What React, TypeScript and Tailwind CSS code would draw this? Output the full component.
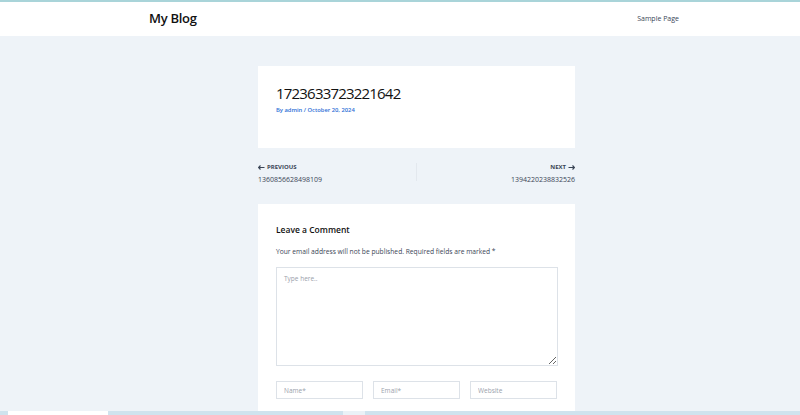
import React from "react";

function Arrow({ dir }: { dir: "left" | "right" }) {
  return (
    <svg width="7" height="5" viewBox="0 0 7 5" className="inline-block">
      {dir === "left" ? (
        <path d="M0.5 2.5 L6.5 2.5 M2.5 0.5 L0.5 2.5 L2.5 4.5" stroke="#3a4556" strokeWidth="1.2" fill="none" />
      ) : (
        <path d="M0.5 2.5 L6.5 2.5 M4.5 0.5 L6.5 2.5 L4.5 4.5" stroke="#3a4556" strokeWidth="1.2" fill="none" />
      )}
    </svg>
  );
}

export default function App() {
  const font = { fontFamily: '"Open Sans", "Noto Sans", Arial, sans-serif' };
  return (
    <div className="w-[800px] h-[415px] overflow-hidden bg-[#eef3f8] flex flex-col relative" style={font}>
      <div className="h-[2px] shrink-0 bg-[#a9d4d9]" />
      <header className="h-[34px] shrink-0 bg-white flex items-center justify-between pl-[149px] pr-[121px]">
        <div className="text-[13px] font-semibold tracking-[-0.3px] text-[#111] leading-none mb-[1px]">My Blog</div>
        <div className="text-[7px] text-[#3a4556] leading-none mb-[1px]">Sample Page</div>
      </header>
      <main className="flex flex-col items-start pl-[258px] pt-[30px]">
        <div className="w-[317px] h-[82px] shrink-0 bg-white pl-[18px] pt-[18px]">
          <h1 className="text-[15px] tracking-[-0.8px] text-[#111] leading-[18px]">1723633723221642</h1>
          <div className="mt-[6px] text-[5.8px] font-semibold text-[#2c6fd6] leading-none">By admin / October 20, 2024</div>
        </div>
        <div className="w-[317px] h-[56px] shrink-0 flex items-start pt-[15px]">
          <div className="flex-1 flex flex-col gap-[6px] pt-[1px]">
            <div className="flex items-center gap-[2px] text-[6px] font-bold text-[#3a4556] leading-none">
              <Arrow dir="left" />
              <span>PREVIOUS</span>
            </div>
            <div className="text-[7px] text-[#3a4556] leading-none">1360856628498109</div>
          </div>
          <div className="w-px h-[18px] bg-[#e3e8ee]" />
          <div className="flex-1 flex flex-col items-end gap-[6px] pt-[1px]">
            <div className="flex items-center gap-[2px] text-[6px] font-bold text-[#3a4556] leading-none">
              <span>NEXT</span>
              <Arrow dir="right" />
            </div>
            <div className="text-[7px] text-[#3a4556] leading-none">1394220238832526</div>
          </div>
        </div>
        <div className="w-[317px] h-[220px] shrink-0 bg-white px-[18px] pt-[22px]">
          <h2 className="text-[8.5px] font-semibold text-[#111] leading-none">Leave a Comment</h2>
          <p className="mt-[14px] text-[6.7px] text-[#3a4556] leading-none">
            Your email address will not be published. Required fields are marked *
          </p>
          <textarea
            className="mt-[12px] block w-[282px] h-[99px] border border-[#dde2e8] text-[6.5px] px-[7px] py-[6px] placeholder:text-[#9aa1ab] outline-none resize-y"
            placeholder="Type here.."
            style={font}
          />
          <div className="mt-[15px] flex gap-[10px]">
            {["Name*", "Email*", "Website"].map((p) => (
              <input
                key={p}
                placeholder={p}
                className="w-[87px] h-[18px] border border-[#dde2e8] px-[7px] text-[6.5px] placeholder:text-[#9aa1ab] outline-none"
                style={font}
              />
            ))}
          </div>
        </div>
      </main>
      <div className="absolute left-0 right-0 bottom-0 h-[4px] bg-[#cfe3ee] flex">
        <div className="ml-[8px] w-[100px] h-full bg-white" />
        <div className="ml-[235px] w-[22px] h-full bg-[#eaf2f7]" />
      </div>
    </div>
  );
}
